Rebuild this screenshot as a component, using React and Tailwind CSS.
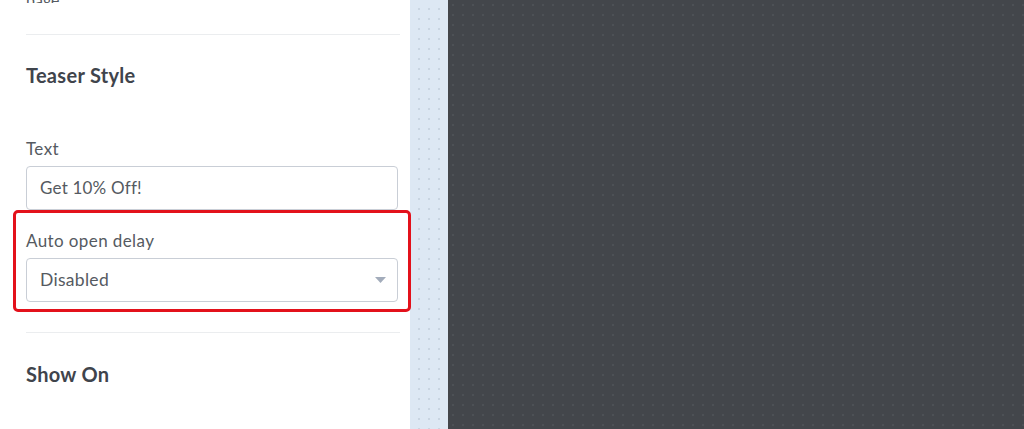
import React from "react";

const font = { fontFamily: "Lato, 'Open Sans', sans-serif" };

const Field = ({ label, children }) => (
  <div className="flex flex-col">
    <label className="text-[17px] leading-5 tracking-[0.4px] text-[#555a61] mb-[7px]">{label}</label>
    {children}
  </div>
);

export default function App() {
  return (
    <div className="flex w-[1024px] h-[429px] overflow-hidden bg-white" style={font}>
      <aside className="w-[410px] shrink-0 bg-white relative">
        <div className="pl-[26px] pr-[10px] -mt-[7px]">
          <p className="text-[16px] leading-[14px] h-[10px] overflow-hidden text-[#555a61]">page</p>
          <div className="mt-[31px] border-t border-[#ebedef]" />
          <h2 className="mt-[28px] text-[20px] font-bold leading-6 tracking-[0.3px] text-[#3f444c]">Teaser Style</h2>

          <div className="mt-[52px]">
            <Field label="Text">
              <div className="h-[44px] mr-[2px] border border-[#c9ced6] rounded-[4px] flex items-center px-[13px] text-[17px] tracking-[0.2px] text-[#555a61]">
                Get 10% Off!
              </div>
            </Field>
          </div>

          <div className="relative mt-[21px]">
            <Field label="Auto open delay">
              <div className="h-[44px] mr-[2px] border border-[#c9ced6] rounded-[4px] flex items-center justify-between px-[13px] text-[17.5px] tracking-[0.3px] text-[#555a61]">
                <span>Disabled</span>
                <svg width="11" height="6" viewBox="0 0 11 6" className="mr-[-2px]">
                  <path d="M0 0h11L5.5 6z" fill="#a3acbb" />
                </svg>
              </div>
            </Field>
            <div className="absolute left-[-13px] top-[-21px] w-[398px] h-[102px] border-[3px] border-[#e3111b] rounded-[5px] pointer-events-none" />
          </div>

          <div className="mt-[30px] border-t border-[#ebedef]" />
          <h2 className="mt-[29px] text-[20px] font-bold leading-6 tracking-[0.3px] text-[#3f444c]">Show On</h2>
        </div>
      </aside>
      <div className="w-[38px] shrink-0 bg-[#dde8f4] bg-[radial-gradient(#c9d5e2_1px,transparent_1.5px)] bg-[size:10px_10px] bg-[position:4px_4px]" />
      <main className="flex-1 bg-[#43464b] bg-[radial-gradient(#4d5156_1px,transparent_1.5px)] bg-[size:10px_10px]" />
    </div>
  );
}
